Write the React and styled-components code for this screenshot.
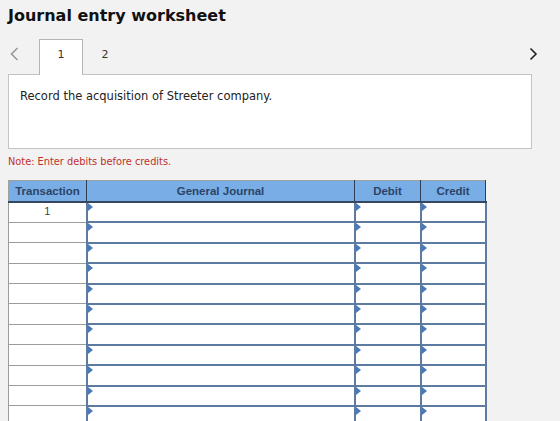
import React from "react";
import styled, { createGlobalStyle } from "styled-components";

const Global = createGlobalStyle`
  html, body { margin: 0; padding: 0; background: #f2f2f2; }
  body { font-family: "DejaVu Sans", Verdana, sans-serif; }
`;

const Page = styled.div`
  width: 560px;
  height: 421px;
  overflow: hidden;
  padding: 5px 8px 0 8px;
  box-sizing: border-box;
`;

const Title = styled.h1`
  margin: 0;
  font-size: 16px;
  line-height: 22px;
  font-weight: bold;
  color: #111;
`;

const TabBar = styled.div`
  display: flex;
  align-items: flex-end;
  height: 47px;
`;

const ArrowBox = styled.div`
  height: 36px;
  width: ${(p) => p.$w}px;
  display: flex;
  align-items: center;
  padding-left: ${(p) => p.$pl || 0}px;
  padding-bottom: 4px;
  box-sizing: border-box;
`;

const Tab = styled.div`
  width: 44px;
  height: 36px;
  box-sizing: border-box;
  font-size: 11px;
  line-height: 30px;
  text-align: center;
  color: #333;
  background: ${(p) => (p.$active ? "#fff" : "transparent")};
  border: 1px solid ${(p) => (p.$active ? "#b4b4b4" : "transparent")};
  border-bottom: none;
  margin-bottom: -1px;
  position: relative;
  z-index: 1;
`;

const Spacer = styled.div`
  flex: 1;
`;

const Panel = styled.div`
  width: 524px;
  height: 75px;
  box-sizing: border-box;
  background: #fff;
  border: 1px solid #c4c4c4;
  padding: 14px 11px;
  font-size: 11.5px;
  color: #222;
`;

const Note = styled.div`
  margin-top: 6px;
  font-size: 9.8px;
  color: #c0302a;
  line-height: 13px;
`;

const Table = styled.table`
  margin-top: 12px;
  border-collapse: collapse;
  table-layout: fixed;
  width: 473px;
  font-family: "Liberation Sans", Arial, sans-serif;
`;

const Th = styled.th`
  width: ${(p) => p.$w}px;
  height: 20px;
  background: #79ade6;
  color: #2b4466;
  font-size: 11.5px;
  font-weight: bold;
  text-align: center;
  padding: 0;
  border-top: 1px solid #a0a0a0;
  border-left: 1px solid #2e3f55;
  border-right: 1px solid #2e3f55;
  border-bottom: 2px solid #34475f;
  &:first-child { border-left: 1px solid #a0a0a0; }
`;

const Row = styled.tr`
  height: 20.4px;
`;

const TransCell = styled.td`
  padding: 0;
  background: #fff;
  border: 1px solid #9c9c9c;
  border-right: none;
  font-size: 11px;
  color: #444;
  text-align: center;
  vertical-align: top;
  line-height: 16px;
`;

const InputCell = styled.td`
  padding: 0;
  background: #fff;
  border: 2px solid #5d7ba0;
  position: relative;
  &::before {
    content: "";
    position: absolute;
    left: 0;
    top: 0;
    border-top: 4px solid transparent;
    border-bottom: 4px solid transparent;
    border-left: 5px solid #4a79b8;
  }
`;

const Chevron = ({ dir, color }) => (
  <svg width="9" height="14" viewBox="0 0 9 14">
    <polyline
      points={dir === "left" ? "7.5,1 1.5,7 7.5,13" : "1.5,1.5 7,7 1.5,12.5"}
      fill="none"
      stroke={color}
      strokeWidth="1.6"
    />
  </svg>
);

const rows = Array.from({ length: 11 }, (_, i) => i);

export default function App() {
  return (
    <>
      <Global />
      <Page>
        <Title>Journal entry worksheet</Title>
        <TabBar>
          <ArrowBox $w={31} $pl={2}>
            <Chevron dir="left" color="#9a9a9a" />
          </ArrowBox>
          <Tab $active>1</Tab>
          <Tab>2</Tab>
          <Spacer />
          <ArrowBox $w={24} $pl={1}>
            <Chevron dir="right" color="#222" />
          </ArrowBox>
        </TabBar>
        <Panel>Record the acquisition of Streeter company.</Panel>
        <Note>Note: Enter debits before credits.</Note>
        <Table>
          <thead>
            <tr>
              <Th $w={77}>Transaction</Th>
              <Th $w={267}>General Journal</Th>
              <Th $w={65}>Debit</Th>
              <Th $w={64}>Credit</Th>
            </tr>
          </thead>
          <tbody>
            {rows.map((i) => (
              <Row key={i}>
                <TransCell>{i === 0 ? "1" : ""}</TransCell>
                <InputCell />
                <InputCell />
                <InputCell />
              </Row>
            ))}
          </tbody>
        </Table>
      </Page>
    </>
  );
}
